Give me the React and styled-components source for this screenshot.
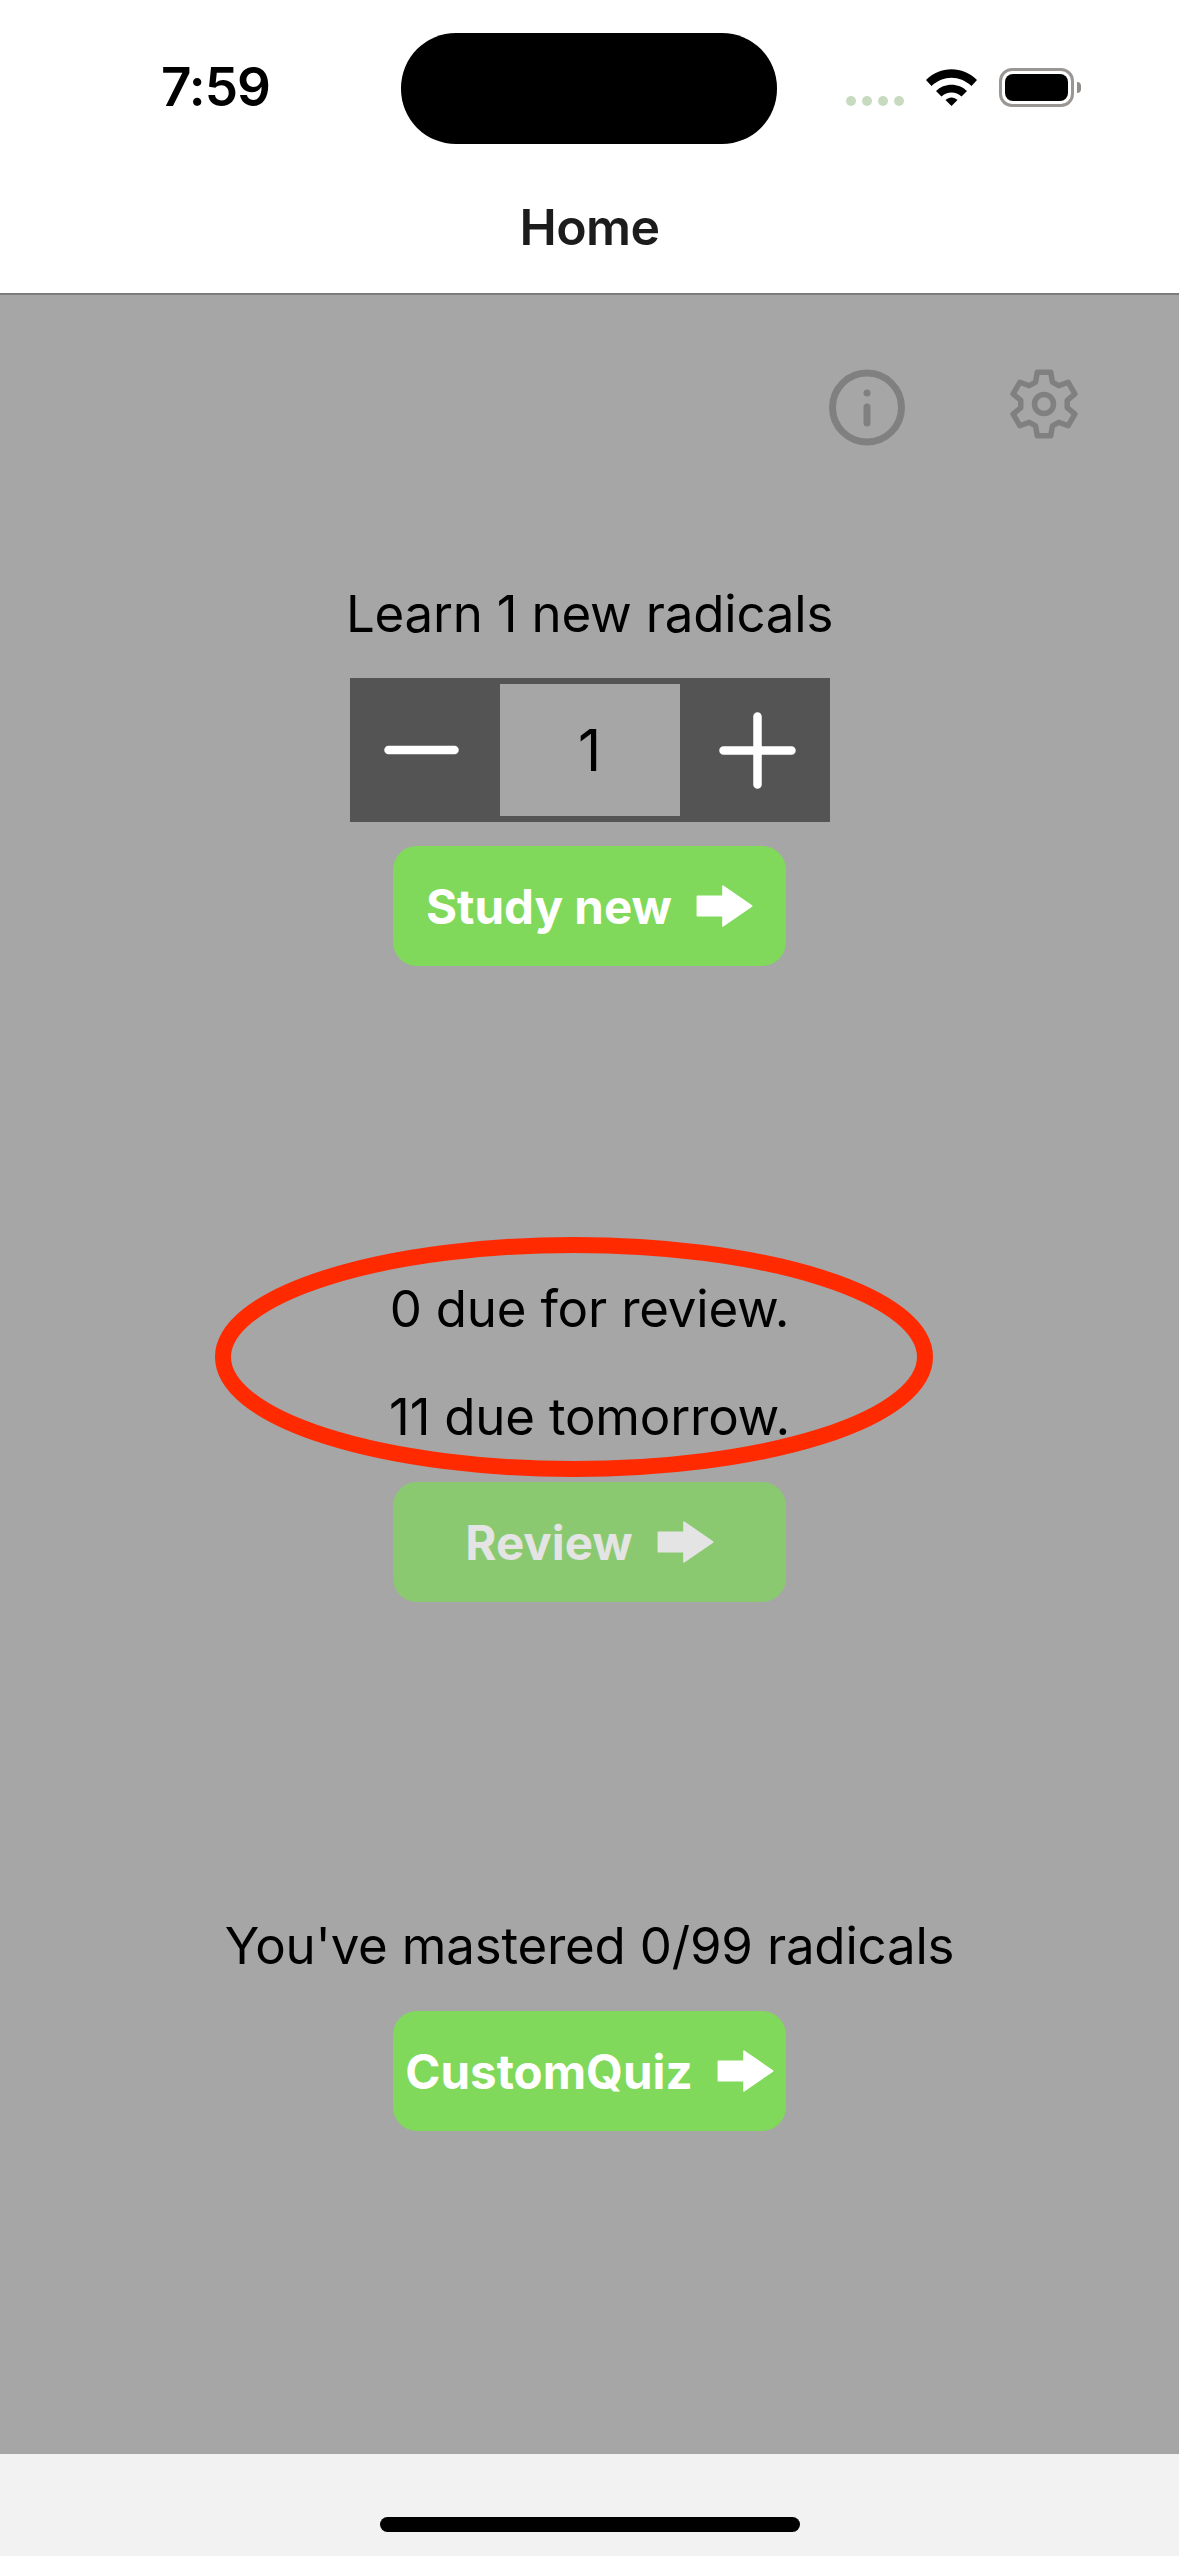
import React from 'react';
import styled, { createGlobalStyle } from 'styled-components';

const Global = createGlobalStyle`
  html, body { margin: 0; padding: 0; background: #fff; }
  * { box-sizing: border-box; }
  body { font-family: Inter, "Liberation Sans", sans-serif; }
`;

const Page = styled.div`
  width: 1179px;
  height: 2556px;
  display: flex;
  flex-direction: column;
  overflow: hidden;
`;

const Header = styled.header`
  height: 295px;
  background: #fff;
  border-bottom: 2px solid #7c7c7c;
  display: flex;
  flex-direction: column;
`;

const StatusBar = styled.div`
  display: flex;
  height: 144px;
  padding-top: 33px;
`;

const Clock = styled.div`
  width: 401px;
  padding: 24px 0 0 161px;
  font-size: 53px;
  line-height: 60px;
  font-weight: 600;
  letter-spacing: -1px;
  color: #000;
`;

const Island = styled.div`
  width: 376px;
  height: 111px;
  background: #000;
  border-radius: 55px;
`;

const StatusIcons = styled.div`
  display: flex;
  align-items: flex-end;
  height: 111px;
  padding: 0 0 37px 69px;
`;

const Dots = styled.div`
  display: flex;
  gap: 6px;
  margin: 0 22px 1px 0;
`;

const Dot = styled.span`
  width: 10px;
  height: 10px;
  border-radius: 50%;
  background: #c8dac0;
`;

const Wifi = styled.svg`
  width: 51px;
  height: 37px;
  margin: 0 22px 1px 0;
  display: block;
`;

const Battery = styled.div`
  width: 75px;
  height: 39px;
  padding: 3px;
  border: 3px solid #9a9694;
  border-radius: 13px;
`;

const BatteryFill = styled.div`
  height: 100%;
  background: #000;
  border-radius: 8px;
`;

const BatteryCap = styled.div`
  width: 4px;
  height: 11px;
  margin: 0 0 14px 3px;
  background: #8f8c8a;
  border-radius: 0 4px 4px 0;
`;

const Title = styled.h1`
  margin: 0;
  height: 149px;
  padding-top: 16px;
  display: flex;
  align-items: center;
  justify-content: center;
  font-size: 50px;
  font-weight: 600;
  letter-spacing: -0.6px;
  color: #1c1c1c;
`;

const Main = styled.main`
  height: 2159px;
  background: #a6a6a6;
  display: flex;
  flex-direction: column;
`;

const Toolbar = styled.div`
  display: flex;
  justify-content: flex-end;
  align-items: flex-start;
  gap: 105px;
  padding: 74px 101px 0 0;
  height: 151px;
`;

const ToolIcon = styled.svg`
  display: block;
  fill: none;
  stroke: #808080;
  stroke-width: ${p => p.$stroke}px;
  stroke-linecap: round;
  stroke-linejoin: round;
`;

const Section = styled.section`
  position: relative;
  display: flex;
  flex-direction: column;
  align-items: center;
  margin-top: ${p => p.$top}px;
`;

const Label = styled.p`
  margin: 0 0 ${p => p.$gap}px;
  font-size: 51px;
  line-height: 60px;
  font-weight: 400;
  color: #000;
  white-space: nowrap;
  letter-spacing: -0.2px;
`;

const Stepper = styled.div`
  width: 480px;
  height: 144px;
  margin-bottom: 24px;
  background: #545454;
  display: flex;
  align-items: center;
`;

const StepButton = styled.div`
  width: 150px;
  padding-left: ${p => p.$pad}px;
  display: flex;
  align-items: center;
`;

const StepValue = styled.div`
  width: 180px;
  height: 132px;
  background: #a6a6a6;
  display: flex;
  align-items: center;
  justify-content: center;
  font-size: 57px;
  color: #000;
`;

const StepIcon = styled.svg`
  display: block;
  stroke: #fff;
  stroke-width: 8.5px;
  stroke-linecap: round;
  fill: none;
`;

const ActionButton = styled.div`
  width: 393px;
  height: 120px;
  border-radius: 24px;
  background: #80d95a;
  opacity: ${p => (p.$disabled ? 0.7 : 1)};
  color: #fff;
  display: flex;
  align-items: center;
  justify-content: center;
  gap: 24px;
  font-size: 47.5px;
  font-weight: 700;
  white-space: nowrap;
`;

const Arrow = styled.svg`
  width: 57px;
  height: 42px;
  fill: #fff;
  stroke: #fff;
  stroke-width: 1.5px;
  stroke-linejoin: round;
  display: block;
  flex: none;
`;

const Annotation = styled.svg`
  position: absolute;
  left: 215px;
  top: -42px;
  width: 718px;
  height: 240px;
  fill: none;
  stroke: #ff2a00;
  stroke-width: 16px;
`;

const Footer = styled.footer`
  height: 102px;
  background: #f2f2f2;
  display: flex;
  justify-content: center;
  padding-top: 63px;
`;

const HomeBar = styled.div`
  width: 420px;
  height: 15px;
  background: #000;
  border-radius: 8px;
`;

const gearPath = () => {
  const pts = [];
  const polar = (r, deg) => {
    const a = (deg * Math.PI) / 180;
    return `${(35 + r * Math.cos(a)).toFixed(2)} ${(35 + r * Math.sin(a)).toFixed(2)}`;
  };
  for (let i = 0; i < 6; i++) {
    const c = -90 + i * 60;
    pts.push(polar(23.5, c - 21), polar(32.5, c - 12), polar(32.5, c + 12), polar(23.5, c + 21));
  }
  return `M${pts.join(' L')} Z`;
};

const ArrowIcon = () => (
  <Arrow viewBox="0 0 55 41">
    <path d="M1 11 H26 V1 L54 20.5 L26 40 V30 H1 Z" />
  </Arrow>
);

export default function App() {
  return (
    <Page>
      <Global />
      <Header>
        <StatusBar>
          <Clock>7:59</Clock>
          <Island />
          <StatusIcons>
            <Dots>
              <Dot />
              <Dot />
              <Dot />
              <Dot />
            </Dots>
            <Wifi viewBox="0 0 51 37">
              <path d="M0 11 C14 -3.5 37 -3.5 51 11 L45.5 17 C33.5 6 17.5 6 5.5 17 Z" />
              <path d="M10 22 C18 13.5 33 13.5 41 22 L35.5 27.5 C30 22 21 22 15.5 27.5 Z" />
              <path d="M19.5 31 C23 27.5 28 27.5 31.5 31 L25.5 37 Z" />
            </Wifi>
            <Battery>
              <BatteryFill />
            </Battery>
            <BatteryCap />
          </StatusIcons>
        </StatusBar>
        <Title>Home</Title>
      </Header>
      <Main>
        <Toolbar>
          <ToolIcon $stroke={7} width="76" height="77" viewBox="0 0 76 77">
            <circle cx="38" cy="38.5" r="34.5" />
            <path d="M38 38 V54" />
            <circle cx="38" cy="24" r="3.5" fill="#808080" stroke="none" />
          </ToolIcon>
          <ToolIcon $stroke={5.5} width="68" height="70" viewBox="1 0 68 70">
            <path d={gearPath()} />
            <circle cx="35" cy="35" r="9.5" />
          </ToolIcon>
        </Toolbar>
        <Section $top={138}>
          <Label $gap={34}>Learn 1 new radicals</Label>
          <Stepper>
            <StepButton $pad={34}>
              <StepIcon width="75" height="10" viewBox="0 0 75 10">
                <path d="M4.5 5 H70.5" />
              </StepIcon>
            </StepButton>
            <StepValue>1</StepValue>
            <StepButton $pad={39}>
              <StepIcon width="77" height="77" viewBox="0 0 77 77">
                <path d="M4.5 38.5 H72.5 M38.5 4.5 V72.5" />
              </StepIcon>
            </StepButton>
          </Stepper>
          <ActionButton>
            Study new
            <ArrowIcon />
          </ActionButton>
        </Section>
        <Section $top={313}>
          <Label $gap={48}>0 due for review.</Label>
          <Label $gap={35}>11 due tomorrow.</Label>
          <ActionButton $disabled>
            Review
            <ArrowIcon />
          </ActionButton>
          <Annotation viewBox="0 0 718 240">
            <ellipse cx="359" cy="120" rx="351" ry="112" />
          </Annotation>
        </Section>
        <Section $top={314}>
          <Label $gap={35}>You've mastered 0/99 radicals</Label>
          <ActionButton>
            CustomQuiz
            <ArrowIcon />
          </ActionButton>
        </Section>
      </Main>
      <Footer>
        <HomeBar />
      </Footer>
    </Page>
  );
}
